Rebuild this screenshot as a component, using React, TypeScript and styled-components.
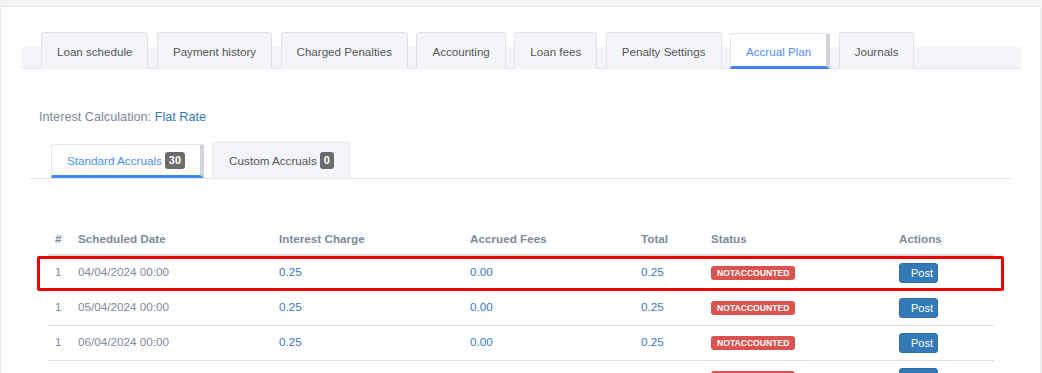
import React from 'react'
import styled, { createGlobalStyle } from 'styled-components'

const GlobalStyle = createGlobalStyle`
  html, body {
    margin: 0;
    padding: 0;
    overflow: hidden;
    background: #f5f5f5;
    font-family: "Liberation Sans", Arial, sans-serif;
  }
`

const mainTabs = [
  'Loan schedule',
  'Payment history',
  'Charged Penalties',
  'Accounting',
  'Loan fees',
  'Penalty Settings',
  'Accrual Plan',
  'Journals',
]

const rows = [
  { n: 1, date: '04/04/2024 00:00' },
  { n: 1, date: '05/04/2024 00:00' },
  { n: 1, date: '06/04/2024 00:00' },
  { n: 1, date: '07/04/2024 00:00' },
]

export default function App() {
  return (
    <>
      <GlobalStyle />
      <Panel>
        <TabBar>
          {mainTabs.map((t) => (
            <Tab key={t} $active={t === 'Accrual Plan'}>
              {t}
            </Tab>
          ))}
        </TabBar>

        <Content>
          <InterestLine>
            Interest Calculation: <a>Flat Rate</a>
          </InterestLine>

          <SubTabBar>
            <SubTab $active>
              Standard Accruals <Count>30</Count>
            </SubTab>
            <SubTab>
              Custom Accruals <Count>0</Count>
            </SubTab>
          </SubTabBar>

          <TableWrap>
            <Table>
              <colgroup>
                <col style={{ width: 22 }} />
                <col style={{ width: 201 }} />
                <col style={{ width: 191 }} />
                <col style={{ width: 171 }} />
                <col style={{ width: 70 }} />
                <col style={{ width: 188 }} />
                <col style={{ width: 103 }} />
              </colgroup>
              <thead>
                <tr>
                  <th>#</th>
                  <th>Scheduled Date</th>
                  <th>Interest Charge</th>
                  <th>Accrued Fees</th>
                  <th>Total</th>
                  <th>Status</th>
                  <th>Actions</th>
                </tr>
              </thead>
              <tbody>
                {rows.map((r) => (
                  <tr key={r.date}>
                    <td>{r.n}</td>
                    <td>{r.date}</td>
                    <Amount>0.25</Amount>
                    <Amount>0.00</Amount>
                    <Amount>0.25</Amount>
                    <td>
                      <StatusLabel>NOTACCOUNTED</StatusLabel>
                    </td>
                    <td>
                      <PostButton>Post</PostButton>
                    </td>
                  </tr>
                ))}
              </tbody>
            </Table>
            <Highlight />
          </TableWrap>
        </Content>
      </Panel>
    </>
  )
}

const Panel = styled.div`
  margin-top: 6px;
  width: 1041px;
  box-sizing: border-box;
  height: 400px;
  background: #fff;
  border: 1px solid #e6e7ee;
  padding: 25px 19px 0 20px;
`

const TabBar = styled.div`
  display: flex;
  align-items: flex-end;
  gap: 8.5px;
  height: 36px;
  padding-left: 20px;
  background: linear-gradient(to bottom, transparent 15px, #f4f5f8 15px);
  border-bottom: 1px solid #e2e4ea;
`

const Tab = styled.div<{ $active?: boolean }>`
  display: flex;
  align-items: center;
  box-sizing: border-box;
  height: ${(p) => (p.$active ? '36px' : '37px')};
  margin-bottom: -1px;
  padding: 0 15px;
  font-size: 11.6px;
  color: ${(p) => (p.$active ? '#4d8ef5' : '#555')};
  background: ${(p) => (p.$active ? '#fff' : '#f4f5f8')};
  border: 1px solid #e2e4ea;
  border-bottom: ${(p) => (p.$active ? '3px solid #4285f4' : 'none')};
  border-right: ${(p) => (p.$active ? '4px solid #d0d3d8' : '1px solid #e2e4ea')};
  border-radius: 3px 3px 0 0;
  padding-top: ${(p) => (p.$active ? '2px' : '0')};
`

const Content = styled.div`
  margin: 0 10px 0 9px;
`

const InterestLine = styled.div`
  margin-top: 39px;
  padding-left: 9px;
  font-size: 12.7px;
  line-height: 18px;
  color: #7c899b;

  a {
    color: #337ab7;
  }
`

const SubTabBar = styled.div`
  display: flex;
  align-items: flex-end;
  gap: 8px;
  margin-top: 16px;
  padding-left: 21px;
  height: 36px;
  border-bottom: 1px solid #e5e7eb;
`

const SubTab = styled.div<{ $active?: boolean }>`
  display: flex;
  align-items: center;
  gap: 3px;
  box-sizing: border-box;
  height: ${(p) => (p.$active ? '34px' : '36px')};
  padding: ${(p) => (p.$active ? '0 15px 0 15px' : '0 15px 0 16px')};
  font-size: 11.7px;
  color: ${(p) => (p.$active ? '#4d8ef5' : '#555')};
  background: ${(p) => (p.$active ? '#fff' : '#f4f5f8')};
  border: 1px solid #e6e8ee;
  border-bottom: ${(p) => (p.$active ? '3px solid #4285f4' : 'none')};
  border-right: ${(p) => (p.$active ? '4px solid #d0d3d8' : '1px solid #e6e8ee')};
  border-radius: 3px 3px 0 0;
  padding-top: ${(p) => (p.$active ? '1px' : '0')};
`

const Count = styled.span`
  display: inline-block;
  padding: 1px 4px;
  border-radius: 3px;
  background: #6b6b6b;
  color: #fff;
  font-weight: bold;
  font-size: 11px;
  line-height: 15px;
`

const TableWrap = styled.div`
  position: relative;
  margin: 42px 0 0 18px;
  width: 946px;
`

const Table = styled.table`
  width: 946px;
  border-collapse: collapse;
  table-layout: fixed;
  font-size: 11.7px;
  color: #7d8a9c;

  th {
    text-align: left;
    font-weight: bold;
    padding: 9px 7px 7px 8px;
    line-height: 17px;
    border-bottom: 2px solid #ddd;
  }

  td {
    box-sizing: border-box;
    padding: 6px 7px 7px 8px;
    line-height: 20px;
    height: 34px;
    border-bottom: 1px solid #ddd;
    vertical-align: middle;
    white-space: nowrap;
  }

  th:first-child,
  td:first-child {
    padding-left: 7px;
  }
`

const Amount = styled.td`
  color: #3a7bc4;
`

const StatusLabel = styled.span`
  display: inline-block;
  padding: 0 6px;
  height: 14px;
  line-height: 14px;
  border-radius: 3px;
  background: #d9534f;
  color: #fff;
  font-size: 8.6px;
  font-weight: bold;
  vertical-align: middle;
`

const PostButton = styled.button`
  display: inline-block;
  height: 20px;
  padding: 0 4px 0 11px;
  border: 1px solid #2e6da4;
  border-radius: 3px;
  background: #337ab7;
  color: #fff;
  font-family: "Liberation Sans", Arial, sans-serif;
  font-size: 11px;
  line-height: 18px;
  vertical-align: middle;
`

const Highlight = styled.div`
  position: absolute;
  left: -11px;
  top: 35px;
  width: 967px;
  height: 35px;
  box-sizing: border-box;
  border: 3px solid #ee0000;
  border-radius: 2px;
  pointer-events: none;
`
